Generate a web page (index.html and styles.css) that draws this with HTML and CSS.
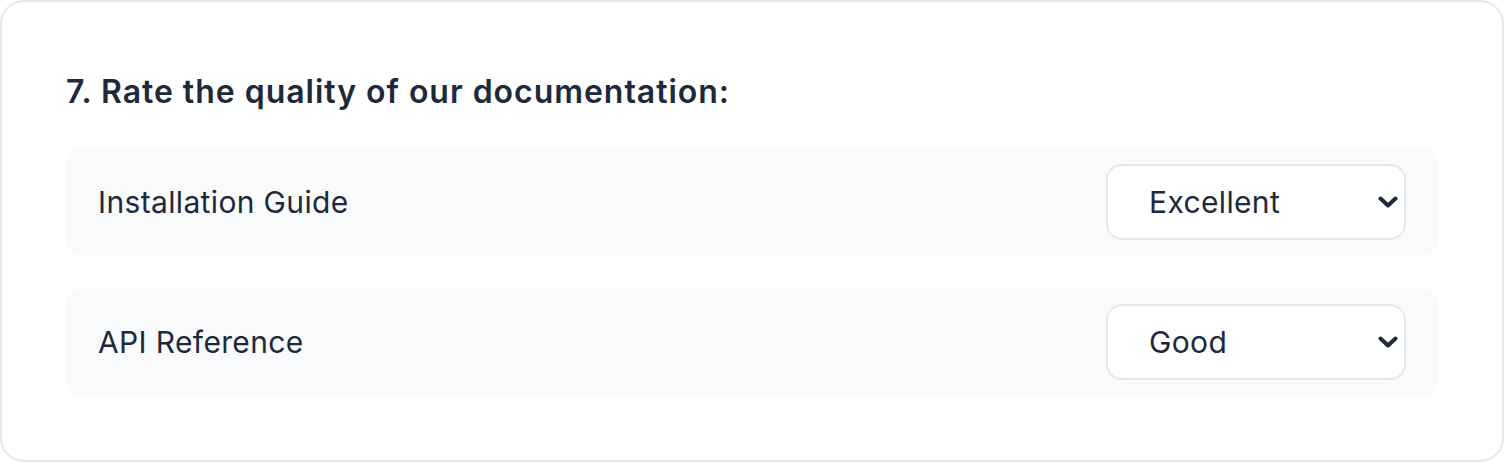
FILE: index.html
```html
<!DOCTYPE html>
<html lang="en">
<head>
<meta charset="utf-8">
<title>Documentation rating</title>
<link rel="stylesheet" href="styles.css">
</head>
<body>
<section class="card">
  <h2 class="question">7. Rate the quality of our documentation:</h2>
  <div class="rows">
    <div class="row">
      <label class="row-label" for="r1">Installation Guide</label>
      <div class="select-wrap">
        <select id="r1" class="select">
          <option>Poor</option>
          <option>Fair</option>
          <option>Good</option>
          <option selected>Excellent</option>
        </select>
        <svg class="chev" width="20" height="12" viewBox="0 0 20 12"><path d="M2.5 2.5 L10 9.5 L17.5 2.5" fill="none" stroke="#1e293b" stroke-width="4" stroke-linecap="round" stroke-linejoin="round"/></svg>
      </div>
    </div>
    <div class="row">
      <label class="row-label" for="r2">API Reference</label>
      <div class="select-wrap">
        <select id="r2" class="select">
          <option>Poor</option>
          <option>Fair</option>
          <option selected>Good</option>
          <option>Excellent</option>
        </select>
        <svg class="chev" width="20" height="12" viewBox="0 0 20 12"><path d="M2.5 2.5 L10 9.5 L17.5 2.5" fill="none" stroke="#1e293b" stroke-width="4" stroke-linecap="round" stroke-linejoin="round"/></svg>
      </div>
    </div>
  </div>
</section>
</body>
</html>
```
FILE: styles.css
```css
* { box-sizing: border-box; }
html, body { margin: 0; padding: 0; background: #ffffff; }
body {
  font-family: Inter, "Noto Sans", "Liberation Sans", sans-serif;
  color: #1e293b;
}
.card {
  width: 1504px;
  height: 462px;
  border: 2px solid #e2e8f0;
  border-radius: 24px;
  padding: 64px;
  background: #ffffff;
}
.question {
  margin: 2px 0 32px 0;
  font-size: 32px;
  line-height: 48px;
  font-weight: 600;
  letter-spacing: 0.97px;
  color: #1e293b;
}
.rows {
  display: flex;
  flex-direction: column;
  gap: 32px;
}
.row {
  display: flex;
  align-items: center;
  justify-content: space-between;
  background: #f8fafc;
  border-radius: 16px;
  padding: 16px 32px;
  height: 108px;
}
.row-label {
  font-size: 30px;
  line-height: 40px;
  letter-spacing: 0.35px;
  color: #1e293b;
}
.select-wrap {
  position: relative;
  width: 300px;
  height: 76px;
}
.select {
  appearance: none;
  -webkit-appearance: none;
  width: 300px;
  height: 76px;
  border: 2px solid #e2e8f0;
  border-radius: 16px;
  background: #ffffff;
  padding: 0 40px 0 41px;
  font-family: Inter, "Noto Sans", "Liberation Sans", sans-serif;
  font-size: 30px;
  letter-spacing: 0.35px;
  color: #1e293b;
  outline: none;
}
.chev {
  position: absolute;
  right: 8px;
  top: 32px;
  pointer-events: none;
}
```
